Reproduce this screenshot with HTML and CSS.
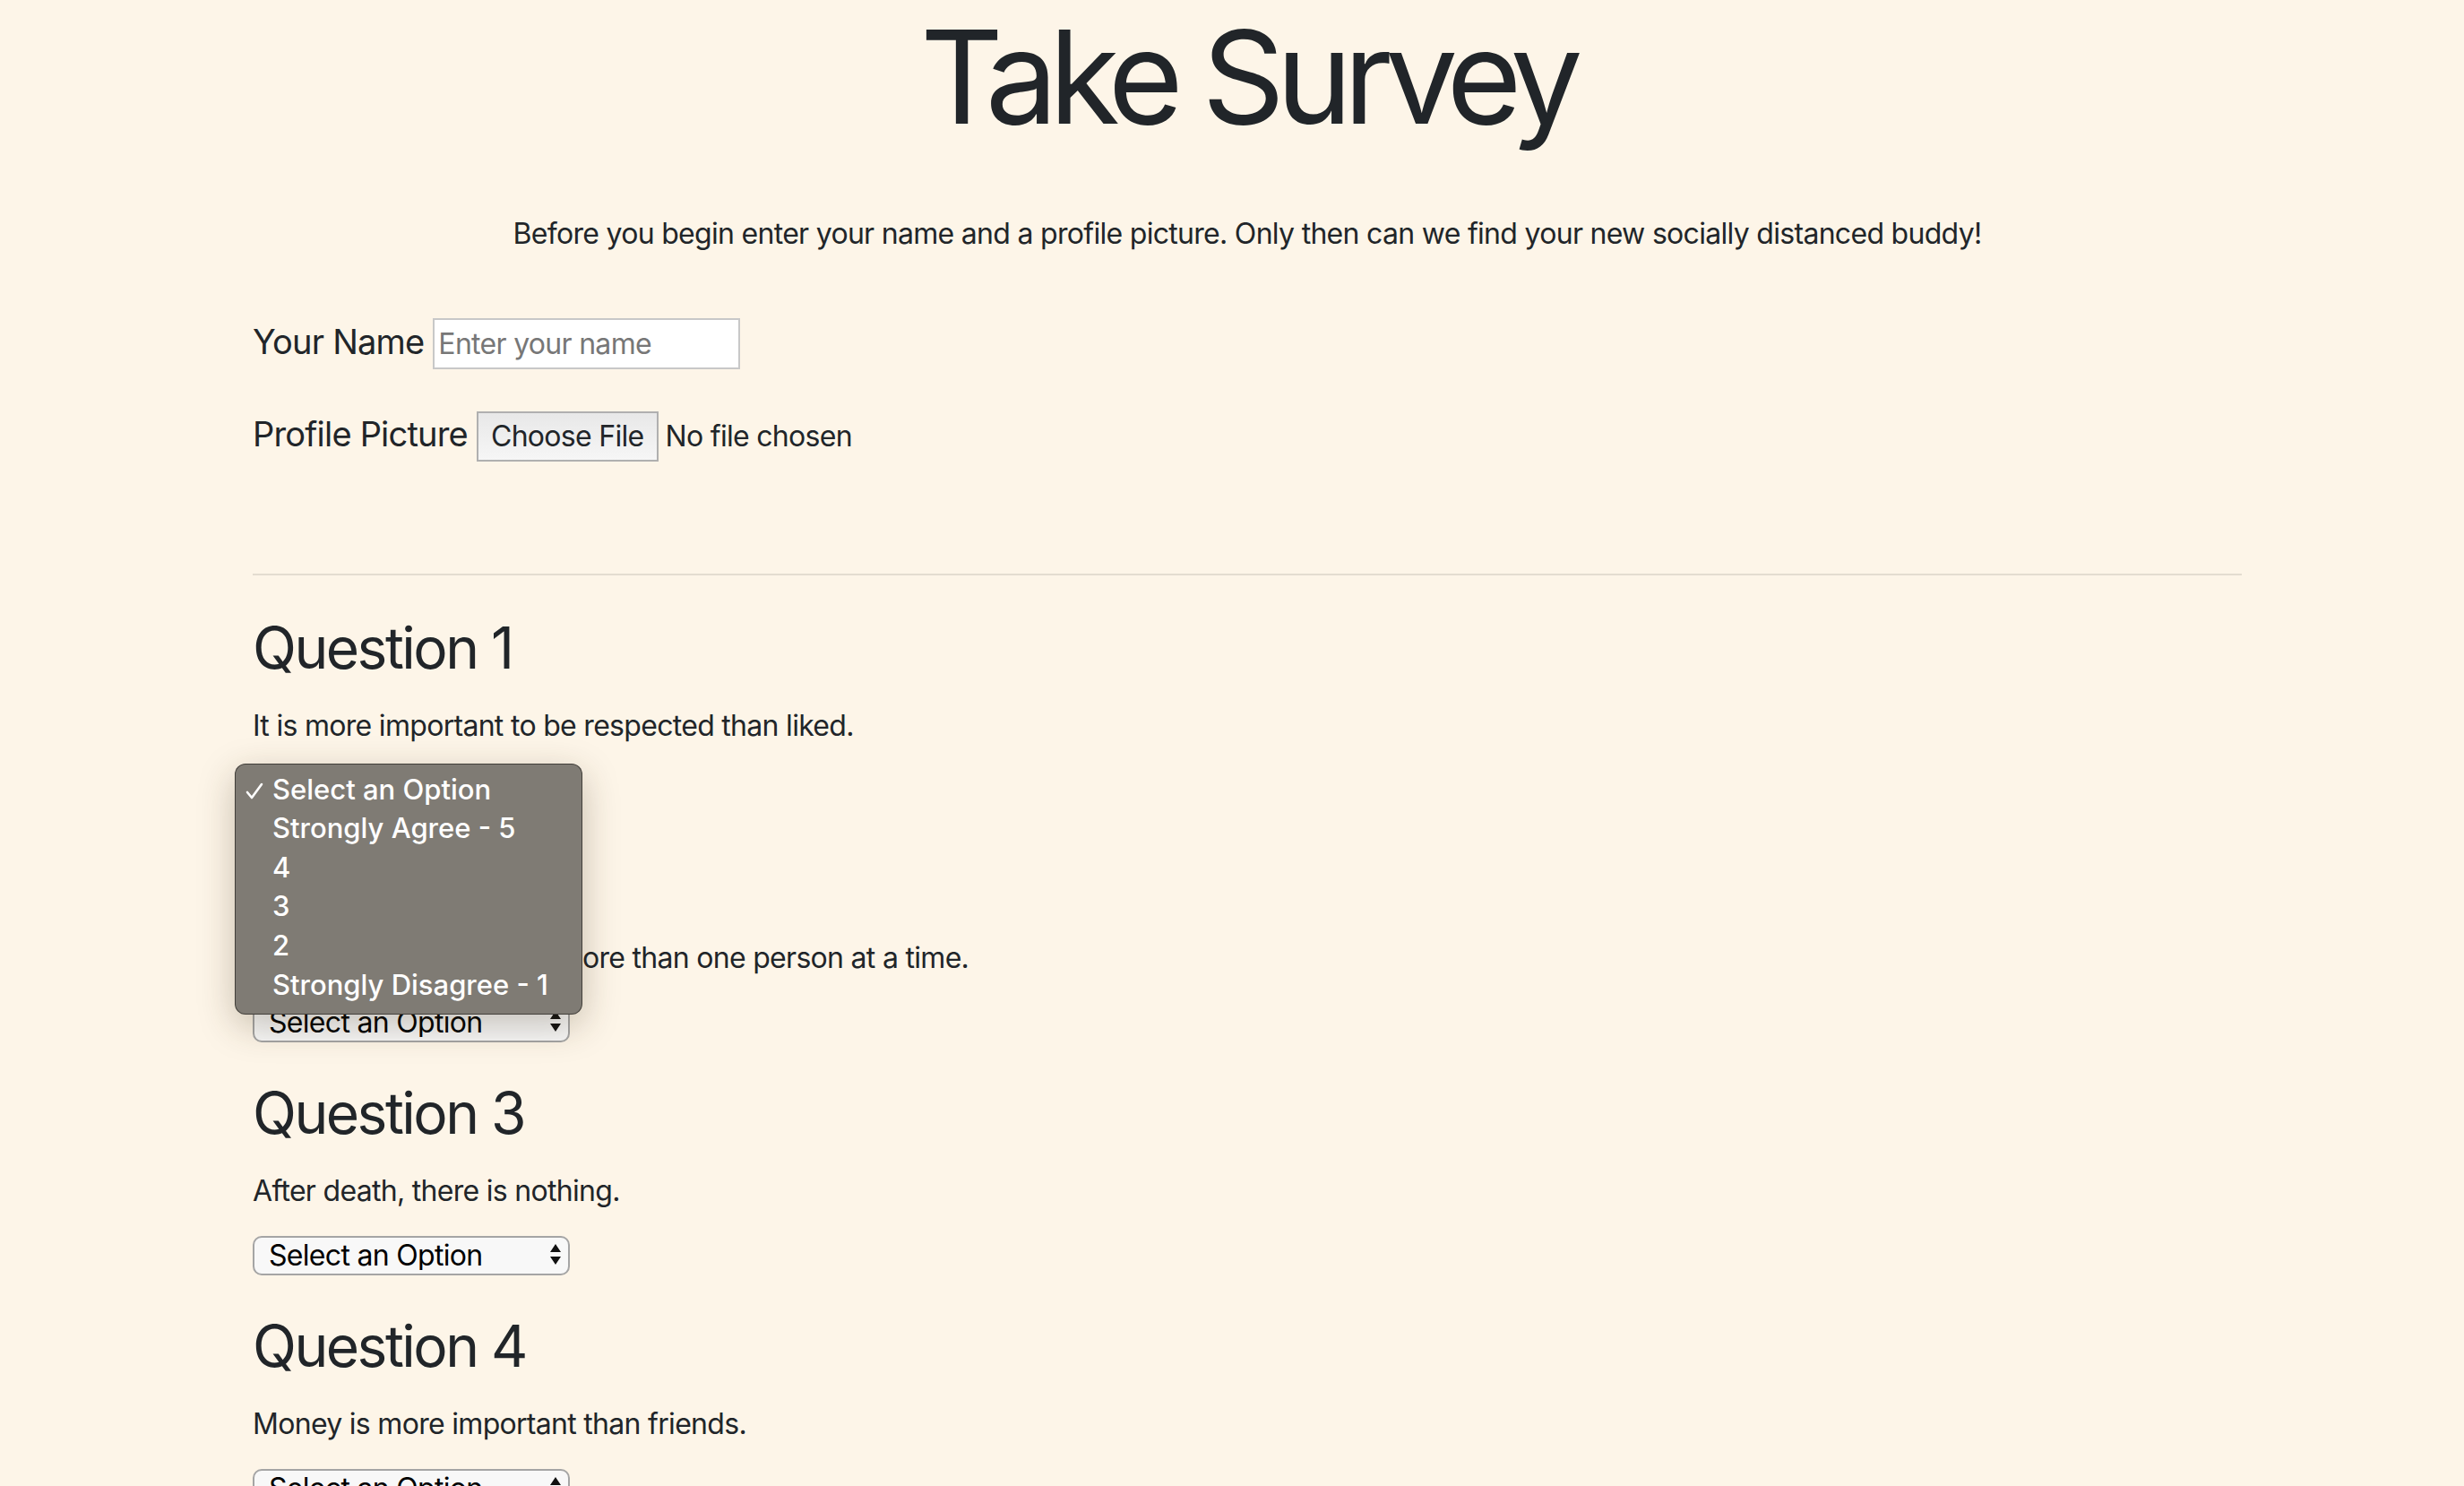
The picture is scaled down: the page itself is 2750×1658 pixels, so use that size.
FILE: index.html
```html
<!DOCTYPE html>
<html lang="en">
<head>
<meta charset="utf-8">
<title>Take Survey</title>
<link rel="stylesheet" href="styles.css">
</head>
<body>
<main class="container">
  <h1 class="title">Take Survey</h1>
  <p class="lead">Before you begin enter your name and a profile picture. Only then can we find your new socially distanced buddy!</p>

  <form class="profile">
    <div class="field field-name">
      <label class="field-label" for="name">Your Name</label>
      <input class="text-input" id="name" type="text" placeholder="Enter your name">
    </div>
    <div class="field field-file">
      <label class="field-label">Profile Picture</label>
      <span class="file-button">Choose File</span>
      <span class="file-status">No file chosen</span>
    </div>
  </form>

  <hr class="divider">

  <section class="question">
    <h2 class="question-title">Question 1</h2>
    <p class="question-text">It is more important to be respected than liked.</p>
    <div class="select-wrap">
      <select class="select"><option>Select an Option</option></select>
      <svg class="select-arrows" width="14" height="26" viewBox="0 0 14 26"><path d="M7 1 L13 10 L1 10 Z M1 15 L13 15 L7 24 Z" fill="#111"/></svg>
      <div class="dropdown">
        <div class="dropdown-item is-selected"><svg class="check" width="20" height="20" viewBox="0 0 20 20"><polyline points="2,11 7,17 18,2" fill="none" stroke="#fff" stroke-width="2.6" stroke-linecap="round" stroke-linejoin="round"/></svg>Select an Option</div>
        <div class="dropdown-item">Strongly Agree - 5</div>
        <div class="dropdown-item">4</div>
        <div class="dropdown-item">3</div>
        <div class="dropdown-item">2</div>
        <div class="dropdown-item">Strongly Disagree - 1</div>
      </div>
    </div>
  </section>

  <section class="question">
    <h2 class="question-title">Question 2</h2>
    <p class="question-text">You can be in love with more than one person at a time.</p>
    <div class="select-wrap">
      <select class="select"><option>Select an Option</option></select>
      <svg class="select-arrows" width="14" height="26" viewBox="0 0 14 26"><path d="M7 1 L13 10 L1 10 Z M1 15 L13 15 L7 24 Z" fill="#111"/></svg>
    </div>
  </section>

  <section class="question">
    <h2 class="question-title">Question 3</h2>
    <p class="question-text">After death, there is nothing.</p>
    <div class="select-wrap">
      <select class="select"><option>Select an Option</option></select>
      <svg class="select-arrows" width="14" height="26" viewBox="0 0 14 26"><path d="M7 1 L13 10 L1 10 Z M1 15 L13 15 L7 24 Z" fill="#111"/></svg>
    </div>
  </section>

  <section class="question">
    <h2 class="question-title">Question 4</h2>
    <p class="question-text">Money is more important than friends.</p>
    <div class="select-wrap">
      <select class="select"><option>Select an Option</option></select>
      <svg class="select-arrows" width="14" height="26" viewBox="0 0 14 26"><path d="M7 1 L13 10 L1 10 Z M1 15 L13 15 L7 24 Z" fill="#111"/></svg>
    </div>
  </section>
</main>
</body>
</html>
```

FILE: styles.css
```css
* { box-sizing: border-box; }

html, body { margin: 0; }

body {
  background: #fdf5e8;
  color: #212529;
  font-family: Inter, "Noto Sans", sans-serif;
  font-size: 32px;
  line-height: 1.5;
  letter-spacing: -0.7px;
  padding-left: 34px;
}

.container {
  width: 2220px;
  margin: 0 auto;
  padding-bottom: 200px;
}

.title {
  font-size: 144px;
  font-weight: 400;
  line-height: 1.2;
  letter-spacing: -9.8px;
  margin: 0;
  text-align: center;
}

.lead {
  text-align: center;
  margin: 64px 0 0;
}

.profile {
  margin-top: 67px;
}

.field {
  display: flex;
  align-items: baseline;
}

.field-file {
  margin-top: 43px;
}

.field-label {
  font-size: 38px;
  line-height: 1.55;
  letter-spacing: -0.8px;
  margin-right: 10px;
}

.text-input {
  width: 343px;
  height: 57px;
  font: inherit;
  font-size: 32px;
  letter-spacing: -0.7px;
  padding: 0 4px;
  border: 2px solid #c8c8c8;
  background: #fff;
  color: #212529;
}

.text-input::placeholder { color: #777; }

.file-button {
  display: inline-flex;
  align-items: center;
  height: 56px;
  padding: 0 14px;
  font-size: 32px;
  border: 2px solid #b0b0b0;
  background: linear-gradient(#e8e8e8, #f6f6f6);
  margin-right: 8px;
}

.divider {
  border: 0;
  border-top: 2px solid rgba(0, 0, 0, 0.1);
  margin: 125px 0 0;
}

.question {
  margin-top: 43px;
}

.question-title {
  font-size: 64px;
  font-weight: 400;
  line-height: 1.2;
  letter-spacing: -2.5px;
  margin: 0 0 24px;
}

.question-text {
  margin: 0 0 24px;
}

.select-wrap {
  position: relative;
  width: 354px;
  height: 44px;
}

.select {
  appearance: none;
  -webkit-appearance: none;
  width: 100%;
  height: 100%;
  font: inherit;
  font-size: 32px;
  letter-spacing: -0.7px;
  line-height: 1;
  color: #000;
  background: #f8f8f8;
  border: 2px solid #a5a5a5;
  border-radius: 10px;
  padding: 0 40px 0 16px;
}

.select-arrows {
  position: absolute;
  right: 9px;
  top: 10px;
  pointer-events: none;
}

.dropdown {
  position: absolute;
  left: -20px;
  top: -6px;
  width: 388px;
  height: 280px;
  padding: 6px 0 0;
  background: #7f7b74;
  border: 1px solid rgba(40, 38, 34, 0.7);
  border-radius: 12px;
  box-shadow: 0 12px 40px rgba(60, 45, 20, 0.28);
  color: #fff;
  letter-spacing: 0;
  z-index: 5;
}

.dropdown-item {
  position: relative;
  font-size: 31px;
  font-weight: 500;
  line-height: 43.6px;
  padding-left: 41px;
}

.check {
  position: absolute;
  left: 11px;
  top: 14px;
}
```
